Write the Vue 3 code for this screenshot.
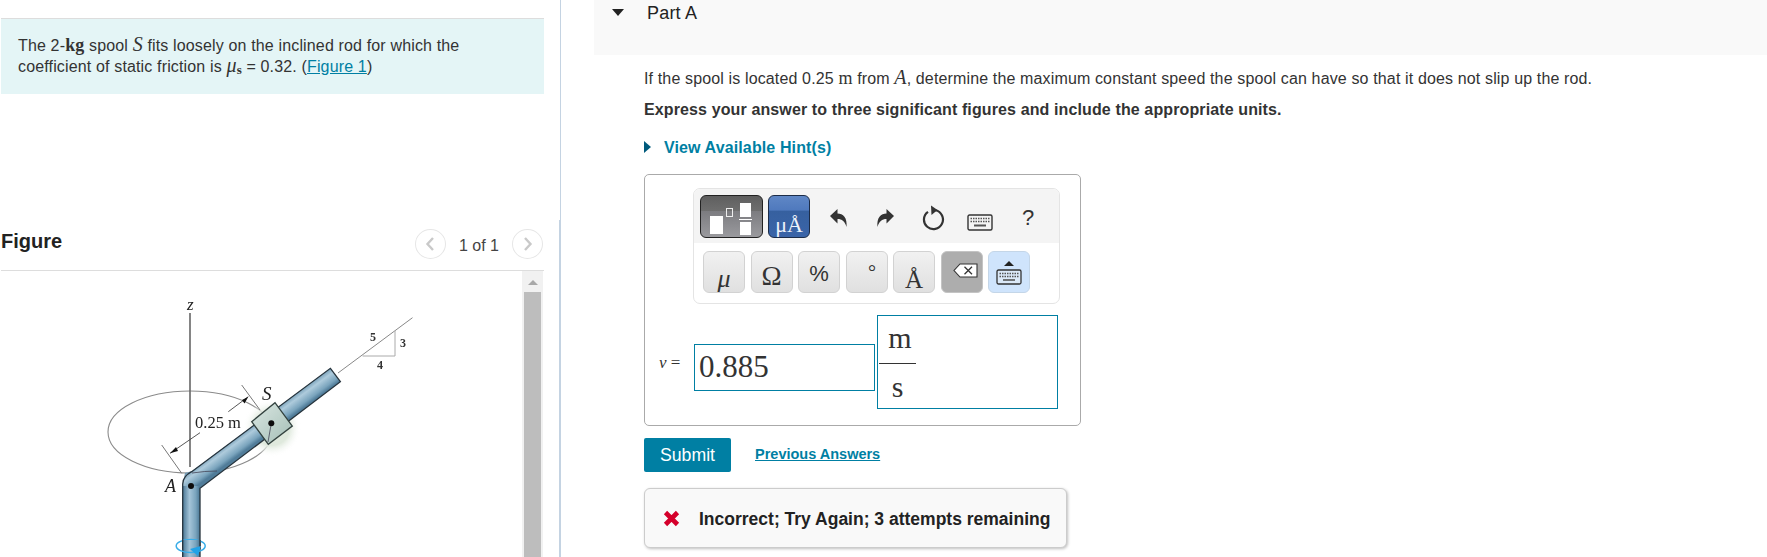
<script setup>
const units = [
  { label: 'μ', cls: 'mu' },
  { label: 'Ω', cls: 'omega' },
  { label: '%', cls: 'pct' },
  { label: '°', cls: 'deg' },
  { label: 'Å', cls: 'ang' },
]
</script>

<template>
  <div class="page">
    <section class="left">
      <div class="intro">
        The 2-<span class="kg">kg</span> spool <i class="mi big">S</i> fits loosely on the inclined rod for which the<br />
        coefficient of static friction is <i class="mi big">μ</i><sub class="sub">s</sub> = 0.32. (<a class="fig-link">Figure 1</a>)
      </div>
      <div class="fig-head">
        <h2 class="fig-title">Figure</h2>
        <div class="pager">
          <span class="circle"><svg width="10" height="16" viewBox="0 0 10 16"><path d="M8 2 L2.5 8 L8 14" fill="none" stroke="#c9c9c9" stroke-width="2.4" /></svg></span>
          <span class="count">1 of 1</span>
          <span class="circle"><svg width="10" height="16" viewBox="0 0 10 16"><path d="M2 2 L7.5 8 L2 14" fill="none" stroke="#c9c9c9" stroke-width="2.4" /></svg></span>
        </div>
      </div>
      <div class="fig-body">
        <svg class="diagram" width="521" height="286" viewBox="1 271 521 286">
          <defs>
            <linearGradient id="rv" x1="0" x2="1" y1="0" y2="0">
              <stop offset="0" stop-color="#4a7795" />
              <stop offset=".4" stop-color="#a4c4d8" />
              <stop offset=".75" stop-color="#7aa4bd" />
              <stop offset="1" stop-color="#4a7795" />
            </linearGradient>
            <linearGradient id="rd" gradientUnits="userSpaceOnUse" x1="258" y1="418" x2="269" y2="433">
              <stop offset="0" stop-color="#5b89a6" />
              <stop offset=".4" stop-color="#aecbdc" />
              <stop offset=".8" stop-color="#7aa4bd" />
              <stop offset="1" stop-color="#507c99" />
            </linearGradient>
            <linearGradient id="sp" x1="0" x2="1" y1="0" y2="1">
              <stop offset="0" stop-color="#dbe8e3" />
              <stop offset="1" stop-color="#a3bdb5" />
            </linearGradient>
            <radialGradient id="halo">
              <stop offset=".6" stop-color="#dfe9dd" />
              <stop offset="1" stop-color="#ffffff" stop-opacity="0" />
            </radialGradient>
          </defs>
          <ellipse cx="190" cy="432" rx="82" ry="41" fill="none" stroke="#8b8b8b" stroke-width="1.1" />
          <line x1="190" y1="313" x2="190" y2="467" stroke="#666" stroke-width="1.6" />
          <rect x="194" y="414" width="50" height="19" fill="#fff" />
          <circle cx="272" cy="428" r="29" fill="url(#halo)" />
          <line x1="338" y1="373" x2="412.5" y2="317.7" stroke="#888" stroke-width="1" />
          <path d="M362.6 356 H395 V331" fill="none" stroke="#aaa" stroke-width="1" />
          <path d="M185 473 L192 471 L330.4 368.3 L340.4 381.7 L200 488.3 V560 H182.7 V484 Z" fill="url(#rd)" />
          <path d="M182.7 560 V486 H200 V560 Z" fill="url(#rv)" />
          <path d="M182.7 560 V484 Q183 476 191.7 471.7 L330.4 368.3 L340.4 381.7 L200 488.3 V560" fill="none" stroke="#27343d" stroke-width="1.3" />
          <path d="M192 473 Q205 471 217 471" fill="none" stroke="#445" stroke-width=".8" />
          <line x1="241.7" y1="385" x2="260" y2="410" stroke="#777" stroke-width="1" />
          <line x1="161.7" y1="445" x2="181.7" y2="473.3" stroke="#777" stroke-width="1" />
          <line x1="170" y1="453.3" x2="200" y2="432.7" stroke="#444" stroke-width=".9" />
          <line x1="228.3" y1="411.7" x2="248.3" y2="396.7" stroke="#444" stroke-width=".9" />
          <path d="M170 453.3 L176 447 L178 451 Z M248.3 396.7 L242 400 L244.5 403.5 Z" fill="#111" />
          <path d="M251.7 421.7 L275 402.7 L292.3 426 L268.3 444.3 Z" fill="url(#sp)" stroke="#33423f" stroke-width="1.3" />
          <line x1="271.3" y1="423.3" x2="268" y2="442" stroke="#445" stroke-width=".8" />
          <circle cx="271.3" cy="423.3" r="3" fill="#0c0c0c" />
          <circle cx="191" cy="486" r="3" fill="#0c0c0c" />
          <ellipse cx="190.7" cy="546" rx="14.5" ry="6.5" fill="none" stroke="#39ade8" stroke-width="1.5" />
          <path d="M182.7 540 H200 V549 H182.7 Z" fill="url(#rv)" />
          <path d="M182.7 540 V549 M200 540 V549" stroke="#27343d" stroke-width="1.3" />
          <path d="M190 549 L201 546 L198 556 Z" fill="#22a2e6" />
          <text x="187" y="310" class="t it" font-size="17">z</text>
          <text x="195" y="428" class="t" font-size="16.5">0.25 m</text>
          <text x="262" y="400" class="t it" font-size="19">S</text>
          <text x="165" y="492" class="t it" font-size="18">A</text>
          <text x="370" y="341" class="t nb" font-size="12">5</text>
          <text x="400" y="347" class="t nb" font-size="12">3</text>
          <text x="377" y="369" class="t nb" font-size="12">4</text>
        </svg>
        <div class="scroll">
          <span class="scroll-arrow"></span>
          <span class="thumb"></span>
        </div>
      </div>
    </section>

    <div class="divider">
      <span class="div-top"></span>
      <span class="div-bottom"></span>
    </div>

    <main class="right">
      <header class="part-head">
        <span class="tri-down"></span>
        <span class="part-title">Part A</span>
      </header>
      <div class="content">
        <p class="q">If the spool is located 0.25 <span class="rm">m</span> from <i class="mi big">A</i>, determine the maximum constant speed the spool can have so that it does not slip up the rod.</p>
        <p class="instr">Express your answer to three significant figures and include the appropriate units.</p>
        <div class="hint"><span class="tri-right"></span><a class="hint-link">View Available Hint(s)</a></div>

        <div class="answer">
          <div class="tools">
            <div class="tools-top">
              <div class="tmpl">
                <span class="b1"></span><span class="b2"></span>
                <span class="frac"><span class="f1"></span><span class="f2"></span><span class="f3"></span></span>
              </div>
              <div class="sym"><span>μÅ</span></div>
              <span class="cell">
                <svg width="19" height="20" viewBox="0 0 19 20"><path d="M1 8 L8.5 1 V5.5 C14 5.5 18.5 9.5 17.5 19 C16 13.5 13 11 8.5 11 V15.5 Z" fill="#333" /></svg>
              </span>
              <span class="cell">
                <svg width="19" height="20" viewBox="0 0 19 20"><path d="M18 8 L10.5 1 V5.5 C5 5.5 .5 9.5 1.5 19 C3 13.5 6 11 10.5 11 V15.5 Z" fill="#333" /></svg>
              </span>
              <span class="cell">
                <svg width="24" height="26" viewBox="0 0 24 26"><path d="M14.5 5.3 A9.5 9.5 0 1 1 7 6.8" fill="none" stroke="#333" stroke-width="2.2" /><path d="M10 0.5 L16.5 5 L10.5 10 Z" fill="#333" /></svg>
              </span>
              <span class="cell kb-cell">
                <svg width="26" height="17" viewBox="0 0 26 17"><rect x="1" y="1" width="24" height="15" rx="1.5" fill="#f4f4f4" stroke="#333" stroke-width="1.4" /><path d="M3.5 4.5 H22.5 M3.5 7.5 H22.5" stroke="#555" stroke-width="1.6" stroke-dasharray="1.5 1" /><path d="M7 11.5 H19" stroke="#555" stroke-width="1.8" /></svg>
              </span>
              <span class="cell help">?</span>
            </div>
            <div class="tools-bottom">
              <button v-for="u in units" :key="u.cls" class="key" :class="u.cls"><span>{{ u.label }}</span></button>
              <button class="key bksp">
                <svg width="25" height="15" viewBox="0 0 25 15"><path d="M24 1 H7 L1 7.5 L7 14 H24 Z" fill="#fff" stroke="#333" stroke-width="1.1" /><path d="M11.5 3.8 L19 11.2 M19 3.8 L11.5 11.2" stroke="#333" stroke-width="1.3" /></svg>
              </button>
              <button class="key kb">
                <span class="kb-up"></span>
                <svg width="26" height="16" viewBox="0 0 26 16"><rect x="1" y="1" width="24" height="14" rx="1.5" fill="#dbe9f8" stroke="#333" stroke-width="1.3" /><path d="M3.5 4.5 H22.5 M3.5 7.5 H22.5" stroke="#555" stroke-width="1.6" stroke-dasharray="1.5 1" /><path d="M7 11 H19" stroke="#555" stroke-width="1.6" /></svg>
              </button>
            </div>
          </div>
          <div class="eq">
            <span class="var"><i>v</i> =</span>
            <div class="value">0.885</div>
            <div class="unit">
              <div class="fraction">
                <span class="num">m</span>
                <span class="den">s</span>
              </div>
            </div>
          </div>
        </div>

        <div class="actions">
          <button class="submit">Submit</button>
          <a class="prev">Previous Answers</a>
        </div>

        <div class="feedback">
          <svg width="17" height="17" viewBox="0 0 17 17"><path d="M2.5 2.5 L14.5 14.5 M14.5 2.5 L2.5 14.5" stroke="#d5002b" stroke-width="4.6" /></svg>
          <span class="fb-text">Incorrect; Try Again; 3 attempts remaining</span>
        </div>
      </div>
    </main>
  </div>
</template>

<style>
html, body { margin: 0; background: #fff; }
</style>

<style scoped>
.page {
  display: flex;
  width: 1767px;
  height: 557px;
  overflow: hidden;
  font-family: "Liberation Sans", Arial, sans-serif;
  color: #333;
  background: #fff;
}
.left {
  width: 543px;
  margin-left: 1px;
  padding-top: 18px;
  display: flex;
  flex-direction: column;
  flex: none;
}
.intro {
  box-sizing: border-box;
  height: 76px;
  padding: 16px 0 0 17px;
  background: #e4f5f6;
  border-top: 1px solid #ddd;
  font-size: 16px;
  letter-spacing: .15px;
  line-height: 21px;
  white-space: nowrap;
}
.kg, .rm { font-family: "Liberation Serif", serif; font-size: 18px; line-height: 0; }
.kg { font-weight: 700; }
.mi { font-family: "Liberation Serif", serif; font-style: italic; }
.big { font-size: 20px; line-height: 0; }
.sub { font-family: "Liberation Serif", serif; font-size: 13px; font-weight: 700; line-height: 0; vertical-align: -2px; }
.fig-link { color: #007fa3; text-decoration: underline; }
.fig-head {
  box-sizing: border-box;
  height: 47px;
  margin-top: 130px;
  padding-bottom: 6px;
  padding-right: 1px;
  border-bottom: 1px solid #ddd;
  display: flex;
  justify-content: space-between;
  align-items: center;
}
.fig-title { margin: 0 0 6px; font-size: 20px; line-height: 24px; font-weight: 700; color: #222; }
.pager { display: flex; align-items: center; gap: 13px; margin-top: -1px; }
.circle {
  box-sizing: border-box;
  width: 31px;
  height: 30px;
  border: 1px solid #e6e6e6;
  border-radius: 50%;
  display: flex;
  align-items: center;
  justify-content: center;
}
.count { font-size: 16px; margin-top: 5px; color: #444; }
.fig-body { flex: 1; min-height: 0; display: flex; overflow: hidden; }
.diagram { flex: none; display: block; filter: blur(.35px); }
.t { font-family: "Liberation Serif", serif; fill: #222; }
.it { font-style: italic; }
.nb { font-weight: 700; fill: #333; }
.scroll {
  width: 21px;
  flex: none;
  background: #f1f1f1;
  display: flex;
  flex-direction: column;
  align-items: center;
}
.scroll-arrow {
  margin-top: 9px;
  width: 0;
  height: 0;
  border-left: 5px solid transparent;
  border-right: 5px solid transparent;
  border-bottom: 5px solid #a8a8a8;
}
.thumb { margin-top: 7px; width: 17px; flex: 1; background: #bdbdbd; }
.divider {
  margin-left: 15px;
  width: 3px;
  flex: none;
  display: flex;
  flex-direction: column;
}
.div-top { height: 220px; width: 1px; margin-left: 1px; background: #c4d3e2; }
.div-bottom { flex: 1; width: 2px; background: #c4d3e2; }
.right { flex: 1; margin-left: 32px; min-width: 0; }
.part-head {
  height: 55px;
  background: #f9f9f9;
  display: flex;
  align-items: flex-start;
  padding-left: 18px;
}
.tri-down {
  margin-top: 9px;
  width: 0;
  height: 0;
  border-left: 6px solid transparent;
  border-right: 6px solid transparent;
  border-top: 7px solid #222;
}
.part-title { margin-left: 23px; margin-top: 1px; font-size: 18px; letter-spacing: .2px; line-height: 24px; color: #222; }
.content { padding-left: 50px; }
.q { margin: 14px 0 0; font-size: 16px; letter-spacing: .14px; line-height: 20px; white-space: nowrap; }
.instr { margin: 11px 0 0; font-size: 16px; letter-spacing: .12px; line-height: 20px; font-weight: 700; }
.hint { margin-top: 18px; height: 20px; display: flex; align-items: center; }
.tri-right {
  width: 0;
  height: 0;
  border-top: 6px solid transparent;
  border-bottom: 6px solid transparent;
  border-left: 7px solid #005a7c;
  margin-top: -3px;
}
.hint-link { margin-left: 13px; font-size: 16px; letter-spacing: .12px; font-weight: 700; color: #007fa3; }
.answer {
  box-sizing: border-box;
  margin-top: 16px;
  width: 437px;
  height: 252px;
  border: 1px solid #aaa;
  border-radius: 5px;
  padding: 13px 0 0 48px;
}
.tools {
  box-sizing: border-box;
  width: 367px;
  height: 116px;
  border: 1px solid #e4e4e4;
  border-radius: 7px;
  overflow: hidden;
}
.tools-top {
  box-sizing: border-box;
  height: 54px;
  background: #f4f4f4;
  padding: 6px 0 0 6px;
  display: flex;
  align-items: flex-start;
}
.tmpl {
  box-sizing: border-box;
  position: relative;
  width: 63px;
  height: 43px;
  border: 1px solid #222;
  border-radius: 6px;
  background: linear-gradient(#5f5f5f, #6e6e6e 36%, #7c7c80 37%, #9a9a9e);
  display: flex;
  align-items: flex-end;
  padding: 0 0 3px 9px;
  gap: 3px;
}
.b1 { width: 13px; height: 18px; background: #fff; }
.b2 { width: 7px; height: 9px; border: 1px solid #eee; box-sizing: border-box; margin-bottom: 17px; }
.frac { margin-left: 3px; width: 13px; display: flex; flex-direction: column; align-items: center; gap: 1px; margin-bottom: -1px; }
.f1 { width: 11px; height: 14px; background: #fff; }
.f2 { width: 13px; height: 1px; background: #fff; margin: 1px 0; }
.f3 { width: 11px; height: 13px; background: #fff; }
.sym {
  box-sizing: border-box;
  margin-left: 5px;
  width: 42px;
  height: 43px;
  border: 1px solid #1c2c48;
  border-radius: 6px;
  background: linear-gradient(#5f87c6, #4f79bd 35%, #36609f 36%, #3a64a8);
  color: #eef3fb;
  font-family: "Liberation Serif", serif;
  font-size: 22px;
  line-height: 1;
  display: flex;
  align-items: flex-end;
  justify-content: center;
  padding-bottom: 1px;
}
.cell {
  flex: none;
  width: 47px;
  height: 43px;
  padding-top: 3px;
  box-sizing: border-box;
  display: flex;
  align-items: center;
  justify-content: center;
}
.cell:nth-of-type(1) { margin-left: 5px; }
.kb-cell { padding-top: 11px; }
.help { font-size: 22px; color: #333; padding-left: 3px; }
.tools-bottom {
  display: flex;
  gap: 5.5px;
  padding: 8px 0 0 9px;
}
.key {
  box-sizing: border-box;
  width: 42px;
  height: 42px;
  margin: 0;
  padding: 0;
  border: 1px solid #d2d2d2;
  border-radius: 6px;
  background: linear-gradient(#f1f1f1, #e0e0e0);
  color: #333;
  font-family: "Liberation Serif", serif;
  font-size: 20px;
  position: relative;
  display: flex;
  align-items: center;
  justify-content: center;
}
.mu { font-style: italic; font-size: 26px; padding-top: 14px; }
.omega { font-size: 27px; padding-top: 9px; }
.pct { font-family: "Liberation Sans", sans-serif; font-size: 22px; padding-top: 3px; }
.deg { font-size: 20px; padding-top: 0; padding-bottom: 0; padding-left: 11px; }
.ang { font-size: 25px; padding-top: 15px; }
.bksp { background: #adadad; border-color: #c4c4c4; padding: 0 0 4px 7px; }
.kb { background: #cfe4fc; border-color: #c4d6e8; flex-direction: column; gap: 3px; padding-top: 2px; }
.kb-up {
  width: 0;
  height: 0;
  border-left: 5px solid transparent;
  border-right: 5px solid transparent;
  border-bottom: 5px solid #222;
}
.eq { display: flex; margin-top: 11px; margin-left: -34px; align-items: flex-start; }
.var {
  width: 35px;
  flex: none;
  font-family: "Liberation Serif", serif;
  font-size: 17px;
  line-height: 20px;
  margin-top: 38px;
  color: #333;
}
.value {
  box-sizing: border-box;
  margin-top: 29px;
  width: 181px;
  height: 47px;
  border: 1px solid #007fa3;
  font-family: "Liberation Serif", serif;
  font-size: 31px;
  line-height: 43px;
  padding-left: 4px;
}
.unit {
  box-sizing: border-box;
  margin-left: 2px;
  width: 181px;
  height: 94px;
  border: 1px solid #007fa3;
  padding-left: 1px;
  font-family: "Liberation Serif", serif;
  font-size: 30px;
  color: #333;
}
.fraction { width: 37px; display: flex; flex-direction: column; align-items: center; }
.num { box-sizing: border-box; height: 48px; width: 100%; text-align: center; border-bottom: 1px solid #333; line-height: 44px; padding-left: 5px; }
.den { line-height: 46px; }
.actions { display: flex; align-items: center; margin-top: 12px; }
.submit {
  box-sizing: border-box;
  width: 87px;
  height: 34px;
  border: 0;
  border-radius: 2px;
  padding: 0;
  background: #007fa3;
  color: #fff;
  font-family: "Liberation Sans", sans-serif;
  font-size: 17.7px;
  line-height: 30px;
}
.prev { margin-left: 24px; font-size: 14.5px; font-weight: 700; color: #007fa3; text-decoration: underline; margin-top: -3px; }
.feedback {
  box-sizing: border-box;
  margin-top: 16px;
  width: 423px;
  height: 60px;
  border: 1px solid #ccc;
  border-radius: 6px;
  background: #f9f9f9;
  box-shadow: 1px 1px 3px rgba(0, 0, 0, .25);
  display: flex;
  align-items: center;
  padding-left: 18px;
}
.fb-text { margin-left: 19px; margin-top: 2px; font-size: 17.5px; font-weight: 700; color: #222; white-space: nowrap; }
</style>
